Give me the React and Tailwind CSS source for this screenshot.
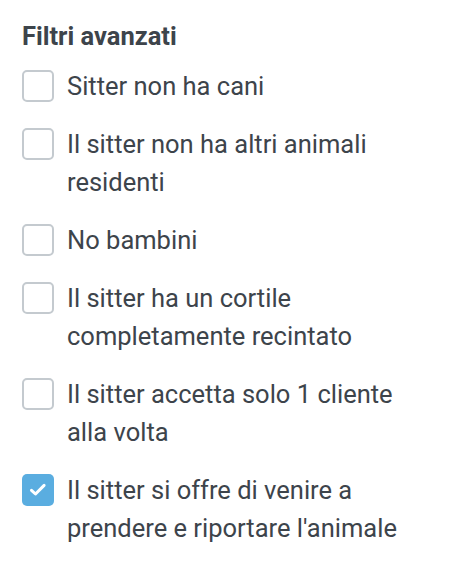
import { useState } from 'react';

const FILTERS = [
  { id: 'no-dogs', label: 'Sitter non ha cani', checked: false },
  { id: 'no-pets', label: 'Il sitter non ha altri animali residenti', checked: false },
  { id: 'no-kids', label: 'No bambini', checked: false },
  { id: 'yard', label: 'Il sitter ha un cortile completamente recintato', checked: false },
  { id: 'one-client', label: 'Il sitter accetta solo 1 cliente alla volta', checked: false },
  { id: 'pickup', label: "Il sitter si offre di venire a prendere e riportare l'animale", checked: true },
];

function Checkbox({ checked }) {
  if (checked) {
    return (
      <span className="mt-[3px] h-8 w-8 shrink-0 rounded-[5px] bg-[#5aade0]">
        <svg width="32" height="32" viewBox="0 0 32 32" fill="none">
          <path d="M9.5 16.3l4 3.7 8.6-8.6" stroke="white" strokeWidth="3" strokeLinecap="round" strokeLinejoin="round" />
        </svg>
      </span>
    );
  }
  return <span className="mt-[3px] h-8 w-8 shrink-0 rounded-[5px] border-2 border-[#c4cacf] bg-white" />;
}

export default function App() {
  const [filters, setFilters] = useState(FILTERS);

  const toggle = (id) =>
    setFilters((prev) => prev.map((f) => (f.id === id ? { ...f, checked: !f.checked } : f)));

  return (
    <div className="min-h-[576px] bg-white px-[22px] pt-[20px] font-['Roboto',sans-serif] text-[#3d444b]">
      <h2 className="text-[25.5px] font-bold leading-[32px] text-[#3d444b]">Filtri avanzati</h2>
      <ul className="mt-[15px] flex flex-col gap-[20px]">
        {filters.map((f) => (
          <li key={f.id} className="flex cursor-pointer items-start gap-[13px]" onClick={() => toggle(f.id)}>
            <Checkbox checked={f.checked} />
            <span className="max-w-[355px] text-[25.5px] leading-[38px]">{f.label}</span>
          </li>
        ))}
      </ul>
    </div>
  );
}
